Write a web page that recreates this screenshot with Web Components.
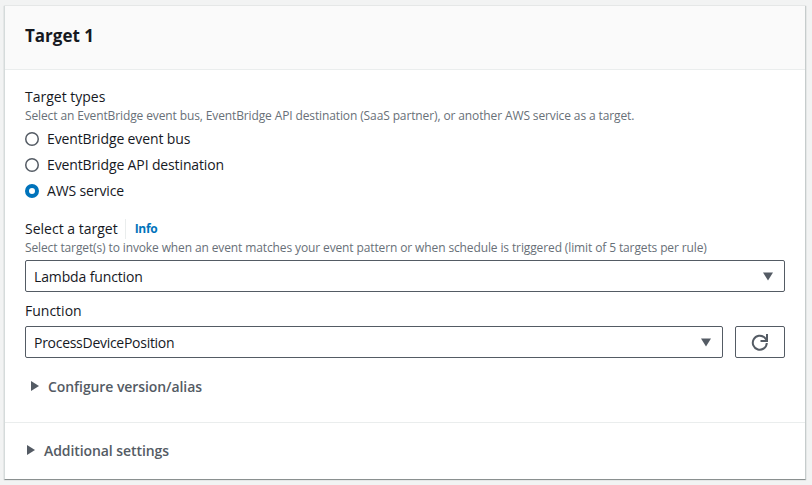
<!DOCTYPE html>
<html>
<head>
<meta charset="utf-8">
<title>Target 1</title>
<style>
html, body { margin: 0; height: 100%; background: #f2f3f3; }
body { font-family: "Open Sans", sans-serif; color: #16191f; overflow: hidden; }
</style>
</head>
<body>
<target-card>
    <span slot="title">Target 1</span>

    <form-field label="Target types" style="--control-gap: 1px" description="Select an EventBridge event bus, EventBridge API destination (SaaS partner), or another AWS service as a target.">
        <radio-option>EventBridge event bus</radio-option>
        <radio-option>EventBridge API destination</radio-option>
        <radio-option checked>AWS service</radio-option>
    </form-field>

    <form-field class="target" label="Select a target" info style="--control-gap: 4px" description="Select target(s) to invoke when an event matches your event pattern or when schedule is triggered (limit of 5 targets per rule)">
        <select-box>Lambda function</select-box>
    </form-field>

    <form-field class="function" label="Function">
        <div class="row">
            <select-box class="tight">ProcessDevicePosition</select-box>
            <refresh-button></refresh-button>
        </div>
    </form-field>

    <expand-row class="version">Configure version/alias</expand-row>

    <expand-row slot="footer">Additional settings</expand-row>
</target-card>

<style>
target-card form-field.target { margin-top: 16px; }
target-card form-field.function { margin-top: 9px; }
target-card expand-row.version { margin: 18px 0 0 5px; }
target-card .row { display: flex; gap: 12px; }
target-card .row select-box { flex: 1; }
target-card select-box.tight { letter-spacing: -0.28px; }
</style>

<script>
"use strict";
{
    class TargetCard extends HTMLElement {
        constructor() {
            super();
            this.attachShadow({ mode: "open" }).innerHTML = /* html */ `
                <style>
                :host {
                    display: block;
                    box-sizing: border-box;
                    width: 802px;
                    height: 474px;
                    margin: 6px 0 0 4px;
                    background: #fff;
                    border-left: 1px solid #d5dbdb;
                    border-right: 1px solid #c6cccc;
                    border-bottom: 1px solid #8a9090;
                    box-shadow: 0 0 1px rgba(0, 28, 36, 0.3);
                }
                header {
                    box-sizing: border-box;
                    height: 64px;
                    padding: 19px 20px 0;
                    background: #fafafa;
                    border-bottom: 1px solid #eaeded;
                    font-size: 17px;
                    line-height: 22px;
                    font-weight: 700;
                }
                main {
                    box-sizing: border-box;
                    height: 353px;
                    padding: 17px 20px 0;
                    border-bottom: 1px solid #eaeded;
                }
                footer { padding: 17px 21px 0; }
                </style>
                <header><slot name="title"></slot></header>
                <main><slot></slot></main>
                <footer><slot name="footer"></slot></footer>
            `;
        }
    }

    class FormField extends HTMLElement {
        constructor() {
            super();
            this.attachShadow({ mode: "open" });
        }

        connectedCallback() {
            const desc = this.getAttribute("description");
            const info = this.hasAttribute("info");
            this.shadowRoot.innerHTML = /* html */ `
                <style>
                :host { display: block; }
                .label {
                    display: flex;
                    align-items: center;
                    height: 20px;
                    font-size: 14px;
                    line-height: 20px;
                    color: #16191f;
                }
                .info {
                    margin-left: 7px;
                    padding-left: 9px;
                    border-left: 1px solid #eaeded;
                    font-size: 12px;
                    font-weight: 700;
                    letter-spacing: -0.3px;
                    color: #0073bb;
                }
                .desc {
                    margin-top: 1px;
                    font-size: 12px;
                    line-height: 16px;
                    letter-spacing: -0.12px;
                    color: #687078;
                    white-space: nowrap;
                }
                .control { margin-top: var(--control-gap, 5px); }
                </style>
                <div class="label">${this.getAttribute("label")}${info ? '<span class="info">Info</span>' : ""}</div>
                ${desc ? `<div class="desc">${desc}</div>` : ""}
                <div class="control"><slot></slot></div>
            `;
        }
    }

    class RadioOption extends HTMLElement {
        constructor() {
            super();
            this.attachShadow({ mode: "open" }).innerHTML = /* html */ `
                <style>
                :host {
                    display: flex;
                    align-items: center;
                    gap: 8px;
                    height: 26px;
                    font-size: 14px;
                    letter-spacing: -0.13px;
                    color: #16191f;
                }
                svg { flex: none; margin-top: 2px; }
                </style>
                <svg width="14" height="14" viewBox="0 0 14 14"></svg>
                <span><slot></slot></span>
            `;
        }

        connectedCallback() {
            const svg = this.shadowRoot.querySelector("svg");
            svg.innerHTML = this.hasAttribute("checked")
                ? '<circle cx="7" cy="7" r="5" fill="#fff" stroke="#0073bb" stroke-width="4"/>'
                : '<circle cx="7" cy="7" r="6.25" fill="#fff" stroke="#545b64" stroke-width="1.5"/>';
        }
    }

    class SelectBox extends HTMLElement {
        constructor() {
            super();
            this.attachShadow({ mode: "open" }).innerHTML = /* html */ `
                <style>
                :host {
                    display: flex;
                    align-items: center;
                    justify-content: space-between;
                    box-sizing: border-box;
                    height: 32px;
                    padding: 0 10px 0 8px;
                    background: #fff;
                    border: 1px solid #545b64;
                    border-radius: 2px;
                    font-size: 14px;
                    letter-spacing: -0.13px;
                    color: #16191f;
                }
                svg { display: block; }
                </style>
                <span><slot></slot></span>
                <svg width="12" height="9" viewBox="0 0 12 9"><path d="M1 .5h10L6 8.5z" fill="#545b64"/></svg>
            `;
        }
    }

    class RefreshButton extends HTMLElement {
        constructor() {
            super();
            this.attachShadow({ mode: "open" }).innerHTML = /* html */ `
                <style>
                :host {
                    display: flex;
                    align-items: center;
                    justify-content: center;
                    box-sizing: border-box;
                    flex: none;
                    width: 50px;
                    height: 32px;
                    background: #fff;
                    border: 1px solid #545b64;
                    border-radius: 2px;
                }
                </style>
                <svg width="18" height="18" viewBox="0 0 18 18" fill="none" stroke="#545b64" stroke-width="2">
                    <path d="M15.8 10A7 7 0 1 1 13.6 4.6L15.8 7"/>
                    <path d="M16 1V8H9.5"/>
                </svg>
            `;
        }
    }

    class ExpandRow extends HTMLElement {
        constructor() {
            super();
            this.attachShadow({ mode: "open" }).innerHTML = /* html */ `
                <style>
                :host {
                    display: flex;
                    align-items: center;
                    gap: 9px;
                    height: 20px;
                    font-size: 14px;
                    font-weight: 600;
                    letter-spacing: -0.08px;
                    color: #545b64;
                }
                svg { flex: none; }
                </style>
                <svg width="9" height="10" viewBox="0 0 9 10"><path d="M1 0v10L9 5z" fill="#545b64"/></svg>
                <span><slot></slot></span>
            `;
        }
    }

    customElements.define("target-card", TargetCard);
    customElements.define("form-field", FormField);
    customElements.define("radio-option", RadioOption);
    customElements.define("select-box", SelectBox);
    customElements.define("refresh-button", RefreshButton);
    customElements.define("expand-row", ExpandRow);
}
</script>
</body>
</html>
